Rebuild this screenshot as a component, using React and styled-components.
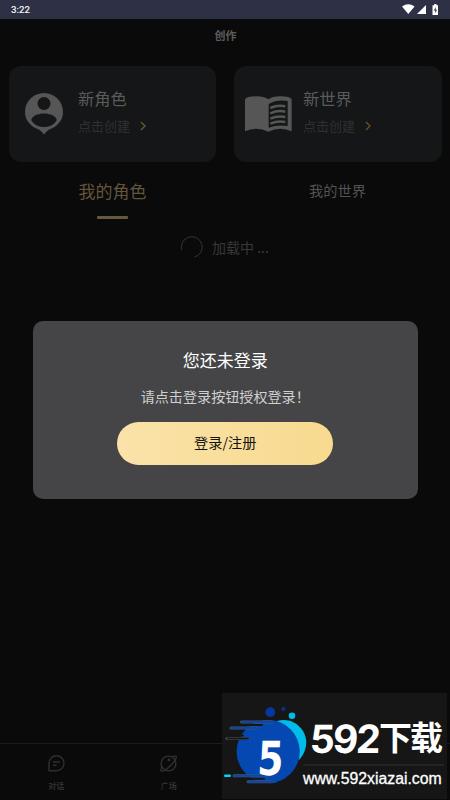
import React from "react";
import styled, { createGlobalStyle } from "styled-components";

const cards = [
  { title: "新角色", icon: <PersonIcon />, arrow: "#6f5c38" },
  { title: "新世界", icon: <BookIcon />, arrow: "#705426" },
];

export default function App() {
  return (
    <>
      <GlobalStyle />
      <Screen>
        <StatusBar>
          <span>3:22</span>
          <StatusIcons />
        </StatusBar>
        <Header>创作</Header>
        <Cards>
          {cards.map(({ title, icon, arrow }) => (
            <Card key={title}>
              <div className="picture">{icon}</div>
              <div>
                <p className="title">{title}</p>
                <p className="create">
                  点击创建
                  <svg width="6" height="10" viewBox="0 0 6 10">
                    <path d="M1 1L5 5L1 9" fill="none" stroke={arrow} strokeWidth="1.2" />
                  </svg>
                </p>
              </div>
            </Card>
          ))}
        </Cards>
        <Tabs>
          <Tab $active>我的角色</Tab>
          <Tab>我的世界</Tab>
        </Tabs>
        <Loading>
          <svg width="22" height="22" viewBox="0 0 22 22">
            <path
              d="M.8 14A10.4 10.4 0 1 1 13.5 21.1"
              fill="none"
              stroke="#353535"
              strokeWidth="1"
            />
          </svg>
          <span>加载中 ...</span>
        </Loading>
        <BottomBar>
          <BottomItem>
            <ChatIcon />
            对话
          </BottomItem>
          <BottomItem>
            <PlanetIcon />
            广场
          </BottomItem>
        </BottomBar>
        <Modal>
          <h2>您还未登录</h2>
          <p>请点击登录按钮授权登录！</p>
          <LoginButton>登录/注册</LoginButton>
        </Modal>
        <Banner>
          <BannerLogo />
          <BannerText>
            <BrandName>
              <b>592</b>
              <strong>下载</strong>
            </BrandName>
            <SiteName>www.592xiazai.com</SiteName>
          </BannerText>
        </Banner>
      </Screen>
    </>
  );
}

function StatusIcons() {
  return (
    <svg width="37" height="12" viewBox="0 0 37 12" fill="#fff">
      <path d="M0 2.4Q6.3-2 12.6 2.4L6.3 10Z" />
      <path d="M15 10L24 1V10Z" />
      <path d="M30.5 1.3h1.7V0h2.3v1.3H36V11h-5.5Z" />
      <path d="M33.8 3L31.8 6.4h1.4V9.3L35 5.8h-1.3Z" fill="#2e3046" />
    </svg>
  );
}

function PersonIcon() {
  return (
    <svg width="38" height="42" viewBox="0 0 38 42">
      <path
        d="M19 0C8.5 0 0 8.5 0 18.8C0 27 5 33 12.5 36C15.5 37.2 17.5 39.4 19 41.5C20.5 39.4 22.5 37.2 25.5 36C33 33 38 27 38 18.8C38 8.5 29.5 0 19 0Z"
        fill="#565656"
      />
      <circle cx="19" cy="10.5" r="6.5" fill="#141617" />
      <path
        d="M6.2 27C7 22.6 13.5 20.5 19 20.5S31 22.6 31.8 27C29.5 31.5 24.5 34 19 34S8.5 31.5 6.2 27Z"
        fill="#141617"
      />
    </svg>
  );
}

function BookIcon() {
  return (
    <svg width="47" height="36" viewBox="0 0 141 108">
      <path
        d="M0 10Q4 1 35 1Q58 1 70 10Q82 1 105 1Q136 1 140 10V106Q105 90 70 107Q35 90 0 106Z"
        fill="#565656"
      />
      <path d="M71 24Q96 10 128 15V90Q98 85 71 95Z" fill="#141617" />
      <g fill="none" stroke="#565656" strokeWidth="7.5">
        <path d="M76 36Q98 26 121 31" />
        <path d="M76 52Q98 42 121 47" />
        <path d="M76 68Q98 58 121 63" />
        <path d="M76 83Q98 73 121 78" />
      </g>
    </svg>
  );
}

function ChatIcon() {
  return (
    <svg width="17" height="17" viewBox="0 0 17 17" fill="none" stroke="#303030" strokeWidth="1.4">
      <path d="M1 15.8V8.3A7.5 7.5 0 1 1 8.5 15.8Z" strokeLinejoin="round" />
      <path d="M5 7h7M5 10.3h3.5" />
    </svg>
  );
}

function PlanetIcon() {
  return (
    <svg width="17" height="17" viewBox="0 0 17 17" fill="none" stroke="#303030" strokeWidth="1.4">
      <circle cx="8.5" cy="8.5" r="7.4" />
      <path d="M2 11.5C.8 13.7.5 15.3 1.2 16C2.5 17 6.5 14.5 10.5 10.5S17 2.5 16 1.2C15.3.5 13.7.9 11.7 2" />
      <circle cx="9" cy="4.8" r=".8" fill="#303030" />
    </svg>
  );
}

function BannerLogo() {
  return (
    <svg width="90" height="106" viewBox="0 0 90 106">
      <circle cx="48.3" cy="19.2" r="4.9" fill="#0637a0" />
      <circle cx="61.5" cy="16" r="2.2" fill="#0a2f80" />
      <circle cx="70" cy="22.7" r="3.3" fill="#00bce9" />
      <path d="M55 28C71 23 84 36 84.3 49Q84.3 59 77 67Z" fill="#00bce9" />
      <circle cx="46.2" cy="58.5" r="31.6" fill="#0648b2" />
      {/* speed lines running into the ball */}
      <path d="M19.5 29H50M9 35H34M12 82.8H46M26 88.7H50" stroke="#50535c" strokeWidth="3" strokeLinecap="round" />
      <path d="M20 29H54M9.5 35H34M12 82.8H46M26 88.7H54" stroke="#0648b2" strokeWidth="2" strokeLinecap="round" />
      <path d="M24 32H40M14 42.6H21M27 85.8H42" stroke="#161616" strokeWidth="2" strokeLinecap="round" />
      <path d="M5 45.5H26" stroke="#50535c" strokeWidth="3" strokeLinecap="round" />
      <path d="M5.5 45.5H26" stroke="#161616" strokeWidth="1.8" strokeLinecap="round" />
      <rect x="2" y="81.4" width="7" height="2.6" rx="1.3" fill="#00d5ff" />
      <text
        x="35"
        y="82.5"
        textLength="26"
        lengthAdjust="spacingAndGlyphs"
        fill="#fff"
        fontFamily="DejaVu Sans"
        fontSize="47"
        fontWeight="700"
        transform="translate(4 0) skewX(-3)"
      >
        5
      </text>
    </svg>
  );
}

const GlobalStyle = createGlobalStyle`
  * {
    box-sizing: border-box;
  }

  body {
    margin: 0;
    background-color: #0a0a0a;
    font-family: "Noto Sans CJK SC", sans-serif;
  }

  p, h2 {
    margin: 0;
    font-weight: 400;
  }
`;

const Screen = styled.div`
  position: relative;
  display: flex;
  flex-direction: column;
  width: 450px;
  height: 800px;
  overflow: hidden;
  background-color: #0a0a0a;
`;

const StatusBar = styled.div`
  display: flex;
  justify-content: space-between;
  height: 19px;
  padding: 4px 11px 0;
  background-color: #2e3046;
  color: #f4f4f6;
  font-family: Roboto, sans-serif;
  font-size: 9.7px;
  font-weight: 500;
  line-height: 12px;
`;

const Header = styled.div`
  height: 47px;
  padding: 8px 0 0 1px;
  color: #5c5c5c;
  font-size: 11px;
  font-weight: 700;
  line-height: 16px;
  text-align: center;
`;

const Cards = styled.div`
  display: grid;
  grid-template-columns: 207px 208px;
  gap: 18px;
  padding-left: 9px;
`;

const Card = styled.div`
  display: flex;
  height: 96px;
  border-radius: 12px;
  background-color: #141617;

  .picture {
    display: flex;
    align-items: center;
    justify-content: center;
    width: 69px;
  }

  .title {
    margin-top: 20px;
    color: #5b5b5b;
    font-size: 16.3px;
    line-height: 24px;
  }

  .create {
    display: flex;
    align-items: center;
    gap: 10px;
    margin-top: 6px;
    color: #303132;
    font-size: 13px;
    line-height: 20px;
  }
`;

const Tabs = styled.div`
  display: grid;
  grid-template-columns: 1fr 1fr;
  height: 57px;
`;

const Tab = styled.div`
  display: flex;
  flex-direction: column;
  align-items: center;
  padding-top: ${({ $active }) => ($active ? "16px" : "15px")};
  color: ${({ $active }) => ($active ? "#63553a" : "#535353")};
  font-size: ${({ $active }) => ($active ? "17px" : "14.2px")};
  line-height: 26px;

  &::after {
    content: "";
    width: 31px;
    height: 3px;
    margin-top: 12px;
    border-radius: 1px;
    background-color: ${({ $active }) => ($active ? "#66583d" : "transparent")};
  }
`;

const Loading = styled.div`
  display: flex;
  align-items: center;
  justify-content: center;
  gap: 9px;
  height: 22px;
  margin-top: 17px;
  color: #383838;
  font-size: 14px;

  span {
    padding-bottom: 1px;
  }
`;

const BottomBar = styled.div`
  display: grid;
  grid-template-columns: repeat(4, 1fr);
  height: 57px;
  margin-top: auto;
  border-top: 1px solid #1c1c1c;
`;

const BottomItem = styled.div`
  display: flex;
  flex-direction: column;
  align-items: center;
  gap: 8px;
  padding-top: 11px;
  color: #444;
  font-size: 8px;
  line-height: 12px;
`;

const Modal = styled.div`
  position: absolute;
  top: 321px;
  left: 33px;
  display: flex;
  flex-direction: column;
  align-items: center;
  width: 384.5px;
  height: 178px;
  padding-top: 26px;
  border-radius: 10px;
  background-color: #454547;

  h2 {
    color: #fff;
    font-size: 17px;
    line-height: 26px;
  }

  p {
    margin-top: 13px;
    color: #d0d0d0;
    font-size: 14.1px;
    line-height: 20px;
    white-space: nowrap;
  }
`;

const LoginButton = styled.button`
  width: 216px;
  height: 43px;
  margin-top: 16px;
  padding: 0 0 3px;
  border: 0;
  border-radius: 22px;
  background: linear-gradient(90deg, #fae2a9, #f8da8f);
  color: #15130d;
  font-family: inherit;
  font-size: 14.2px;
`;

const Banner = styled.div`
  position: absolute;
  top: 693px;
  left: 222px;
  display: flex;
  width: 225px;
  height: 106px;
  background-color: #161616;
`;

const BannerText = styled.div`
  position: absolute;
  top: 24px;
  left: 81px;
  width: 141px;
  color: #fff;
`;

const BrandName = styled.div`
  display: flex;
  height: 49px;
  padding-left: 7px;
  border-bottom: 2px solid #242424;
  white-space: nowrap;

  b {
    width: 69px;
    font-family: Inter, sans-serif;
    font-size: 39px;
    font-weight: 700;
    letter-spacing: -2px;
    line-height: 44px;
    transform: skewX(-3deg);
  }

  strong {
    font-size: 33px;
    font-weight: 700;
    letter-spacing: -2px;
    line-height: 38px;
  }
`;

const SiteName = styled.div`
  margin-top: 4px;
  font-family: "Liberation Sans", sans-serif;
  font-size: 15.8px;
  line-height: 18px;
  -webkit-text-stroke: 0.3px #fff;
`;
